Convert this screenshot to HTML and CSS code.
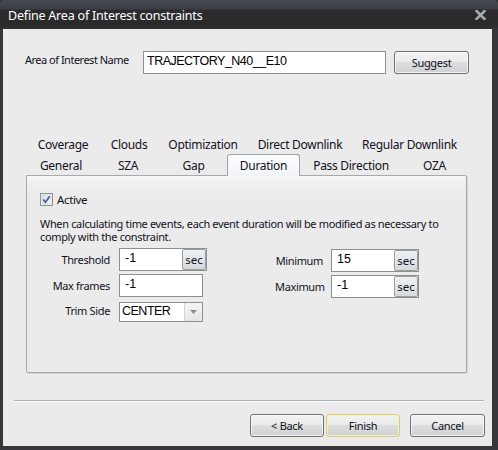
FILE: index.html
```html
<!DOCTYPE html>
<html>
<head>
<meta charset="utf-8">
<link rel="stylesheet" href="styles.css">
</head>
<body>
<div class="window">
  <div class="titlebar">
    <span class="title">Define Area of Interest constraints</span>
    <svg class="close" width="11" height="10" viewBox="0 0 11 10"><path d="M1.5 1 L9.5 9 M9.5 1 L1.5 9" stroke="#a3abb3" stroke-width="2.6" stroke-linecap="square"/></svg>
  </div>
  <div class="client">
    <div class="name-row">
      <label class="name-label">Area of Interest Name</label>
      <div class="textbox name-box">TRAJECTORY_N40__E10</div>
      <button class="btn suggest">Suggest</button>
    </div>

    <div class="tabs">
      <div class="tabrow back">
        <div class="tab t-coverage">Coverage</div>
        <div class="tab t-clouds">Clouds</div>
        <div class="tab t-opt">Optimization</div>
        <div class="tab t-direct">Direct Downlink</div>
        <div class="tab t-regular">Regular Downlink</div>
      </div>
      <div class="tabrow front">
        <div class="tab t-general">General</div>
        <div class="tab t-sza">SZA</div>
        <div class="tab t-gap">Gap</div>
        <div class="tab t-duration selected">Duration</div>
        <div class="tab t-pass">Pass Direction</div>
        <div class="tab t-oza">OZA</div>
      </div>
    </div>

    <div class="panel">
      <div class="check-row">
        <svg class="checkbox" width="13" height="13" viewBox="0 0 13 13">
          <defs><linearGradient id="cb" x1="0" y1="0" x2="1" y2="1"><stop offset="0" stop-color="#d9dde2"/><stop offset="1" stop-color="#f6f7f8"/></linearGradient></defs>
          <rect x="0.5" y="0.5" width="12" height="12" fill="#f4f4f4" stroke="#8e8f8f"/>
          <rect x="2" y="2" width="9" height="9" fill="url(#cb)" stroke="#c6cbd1" stroke-width="0.6"/>
          <path d="M3.3 6.4 L5.4 9.2 L9.8 3.2" fill="none" stroke="#4a5f97" stroke-width="1.7"/>
        </svg>
        <span class="check-label">Active</span>
      </div>
      <p class="desc">When calculating time events, each event duration will be modified as necessary to comply with the constraint.</p>
      <div class="form">
        <div class="grid left">
          <span class="flabel">Threshold</span>
          <div class="field w88"><span class="val">-1</span><span class="unit">sec</span></div>
          <span class="flabel">Max frames</span>
          <div class="field w84"><span class="val">-1</span></div>
          <span class="flabel">Trim Side</span>
          <div class="field combo w84"><span class="val cval">CENTER</span><span class="arrow"><svg width="7" height="4" viewBox="0 0 7 4"><path d="M0 0 H7 L3.5 4 Z" fill="#8a8a8a"/></svg></span></div>
        </div>
        <div class="grid right">
          <span class="flabel">Minimum</span>
          <div class="field w88"><span class="val">15</span><span class="unit">sec</span></div>
          <span class="flabel">Maximum</span>
          <div class="field w88"><span class="val">-1</span><span class="unit">sec</span></div>
        </div>
      </div>
    </div>

    <div class="separator"></div>

    <div class="buttons">
      <button class="btn">&lt; Back</button>
      <button class="btn default">Finish</button>
      <button class="btn cancel">Cancel</button>
    </div>
  </div>
</div>
</body>
</html>
```

FILE: styles.css
```css
* { box-sizing: border-box; }
html, body {
  margin: 0;
  padding: 0;
  background: #333437;
}
.window {
  width: 498px;
  height: 450px;
  display: flex;
  flex-direction: column;
  background: #36373a;
  font-family: "Noto Sans", "DejaVu Sans", sans-serif;
  font-size: 11px;
  letter-spacing: -0.35px;
  color: #111122;
}
.titlebar {
  height: 29px;
  flex: none;
  display: flex;
  align-items: center;
  padding: 0 12px 0 8px;
  background: linear-gradient(#474b53 0, #3b3e45 9px, #2c2c2e 10px, #2a2a2b 24px, #303031 29px);
  border-radius: 5px 5px 0 0;
}
.title {
  flex: 1;
  color: #ffffff;
  font-size: 12.5px;
  letter-spacing: -0.2px;
  padding-top: 2px;
}
.close { margin-top: 1px; }
.client {
  flex: 1;
  margin: 0 6px 4px 3px;
  background: #ebebeb;
  display: flex;
  flex-direction: column;
  padding: 22px 0 9px 0;
}
.name-row {
  display: flex;
  align-items: flex-start;
  padding-left: 22px;
  height: 23px;
}
.name-label {
  width: 118px;
  padding-top: 1px;
  letter-spacing: -0.5px;
}
.textbox {
  background: #fff;
  border: 1px solid #8e8f8f;
  height: 23px;
}
.name-box {
  width: 243px;
  padding: 2px 0 0 3px;
  font-family: "Liberation Sans", Arial, sans-serif;
  font-size: 12.5px;
  letter-spacing: -0.5px;
  color: #000;
}
.btn {
  font-family: "Noto Sans", "DejaVu Sans", sans-serif;
  font-size: 11px;
  letter-spacing: -0.3px;
  color: #111122;
  width: 74px;
  height: 23px;
  padding: 0;
  border: 1px solid #707070;
  border-radius: 3px;
  background: linear-gradient(#f2f2f2 0, #ebebeb 45%, #dddddd 50%, #cfd1d4 100%);
  box-shadow: inset 0 0 0 1px rgba(255,255,255,0.7);
}
.suggest { margin-left: 8px; width: 75px; }
.tabs {
  margin: 61px 0 0 23px;
  width: 441px;
  position: relative;
  z-index: 1;
}
.tabrow { display: grid; }
.tabrow.back {
  height: 19px;
  grid-template-columns: 74px 58px 90px 104px 115px;
}
.tabrow.front {
  height: 21px;
  grid-template-columns: 70px 64px 67px 73px 102px 65px;
}
.tab {
  display: flex;
  align-items: center;
  justify-content: center;
  font-size: 12px;
  letter-spacing: -0.3px;
  white-space: nowrap;
}
.tab.selected {
  height: 22px;
  border: 1px solid #a0a4a8;
  border-bottom: none;
  border-radius: 3px 3px 0 0;
  background: linear-gradient(#fcfdfe 0, #f2f5f8 100%);
  padding-bottom: 1px;
}
.panel {
  margin-left: 23px;
  width: 441px;
  height: 198px;
  border: 1px solid #a7a9ab;
  border-radius: 0 2px 2px 2px;
  background: linear-gradient(#f7f7f7 0, #efefef 8px, #ebebeb 20px);
  box-shadow: 1px 1px 0 #d4d4d4;
  padding: 17px 13px 0 13px;
}
.check-row {
  display: flex;
  align-items: center;
  height: 13px;
}
.check-label { margin-left: 4px; font-size: 11.5px; }
.desc {
  margin: 11px 0 0 0;
  line-height: 13px;
  width: 413px;
}
.form {
  display: flex;
  margin-top: 5px;
}
.grid {
  display: grid;
  align-items: center;
  row-gap: 3px;
}
.grid.left {
  grid-template-columns: 70px 88px;
  grid-template-rows: 23px 23px 20px;
  column-gap: 9px;
}
.grid.right {
  margin-left: 68px;
  padding-top: 1px;
  grid-template-columns: 48px 88px;
  grid-template-rows: 23px 23px;
  column-gap: 8px;
  align-content: start;
}
.flabel {
  text-align: right;
  white-space: nowrap;
}
.field {
  height: 23px;
  background: #fff;
  border: 1px solid #8e8f8f;
  display: flex;
  align-items: stretch;
}
.w88 { width: 88px; }
.w84 { width: 84px; }
.val {
  flex: 1;
  padding: 2px 0 0 5px;
  font-family: "Liberation Sans", Arial, sans-serif;
  font-size: 12.5px;
  letter-spacing: 0;
  color: #000;
}
.unit {
  width: 24px;
  border: 1px solid #9c9d9e;
  border-radius: 2px;
  background: linear-gradient(#eef0f2 0, #e3e6e9 50%, #d6d9dc 100%);
  display: flex;
  align-items: center;
  justify-content: center;
  font-size: 11.5px;
  letter-spacing: 0;
  color: #111122;
  padding-bottom: 1px;
}
.combo {
  height: 20px;
  margin-top: 3px;
}
.cval { padding: 1px 0 0 2px; letter-spacing: -0.5px; }
.arrow {
  width: 18px;
  border-left: 1px solid #d0d2d4;
  background: linear-gradient(#f4f5f6, #e4e6e8);
  display: flex;
  align-items: center;
  justify-content: center;
}
.separator {
  margin: 27px 8px 0 11px;
  height: 2px;
  border-top: 1px solid #a9b1b9;
  border-bottom: 1px solid #fafafa;
}
.buttons {
  display: flex;
  justify-content: flex-end;
  margin-top: 12px;
  padding-right: 7px;
}
.btn.default {
  margin-left: 2px;
  border-color: #d9cc86;
  box-shadow: inset 0 0 0 1px #f7efbe;
}
.btn.cancel { margin-left: 10px; width: 75px; }
```
